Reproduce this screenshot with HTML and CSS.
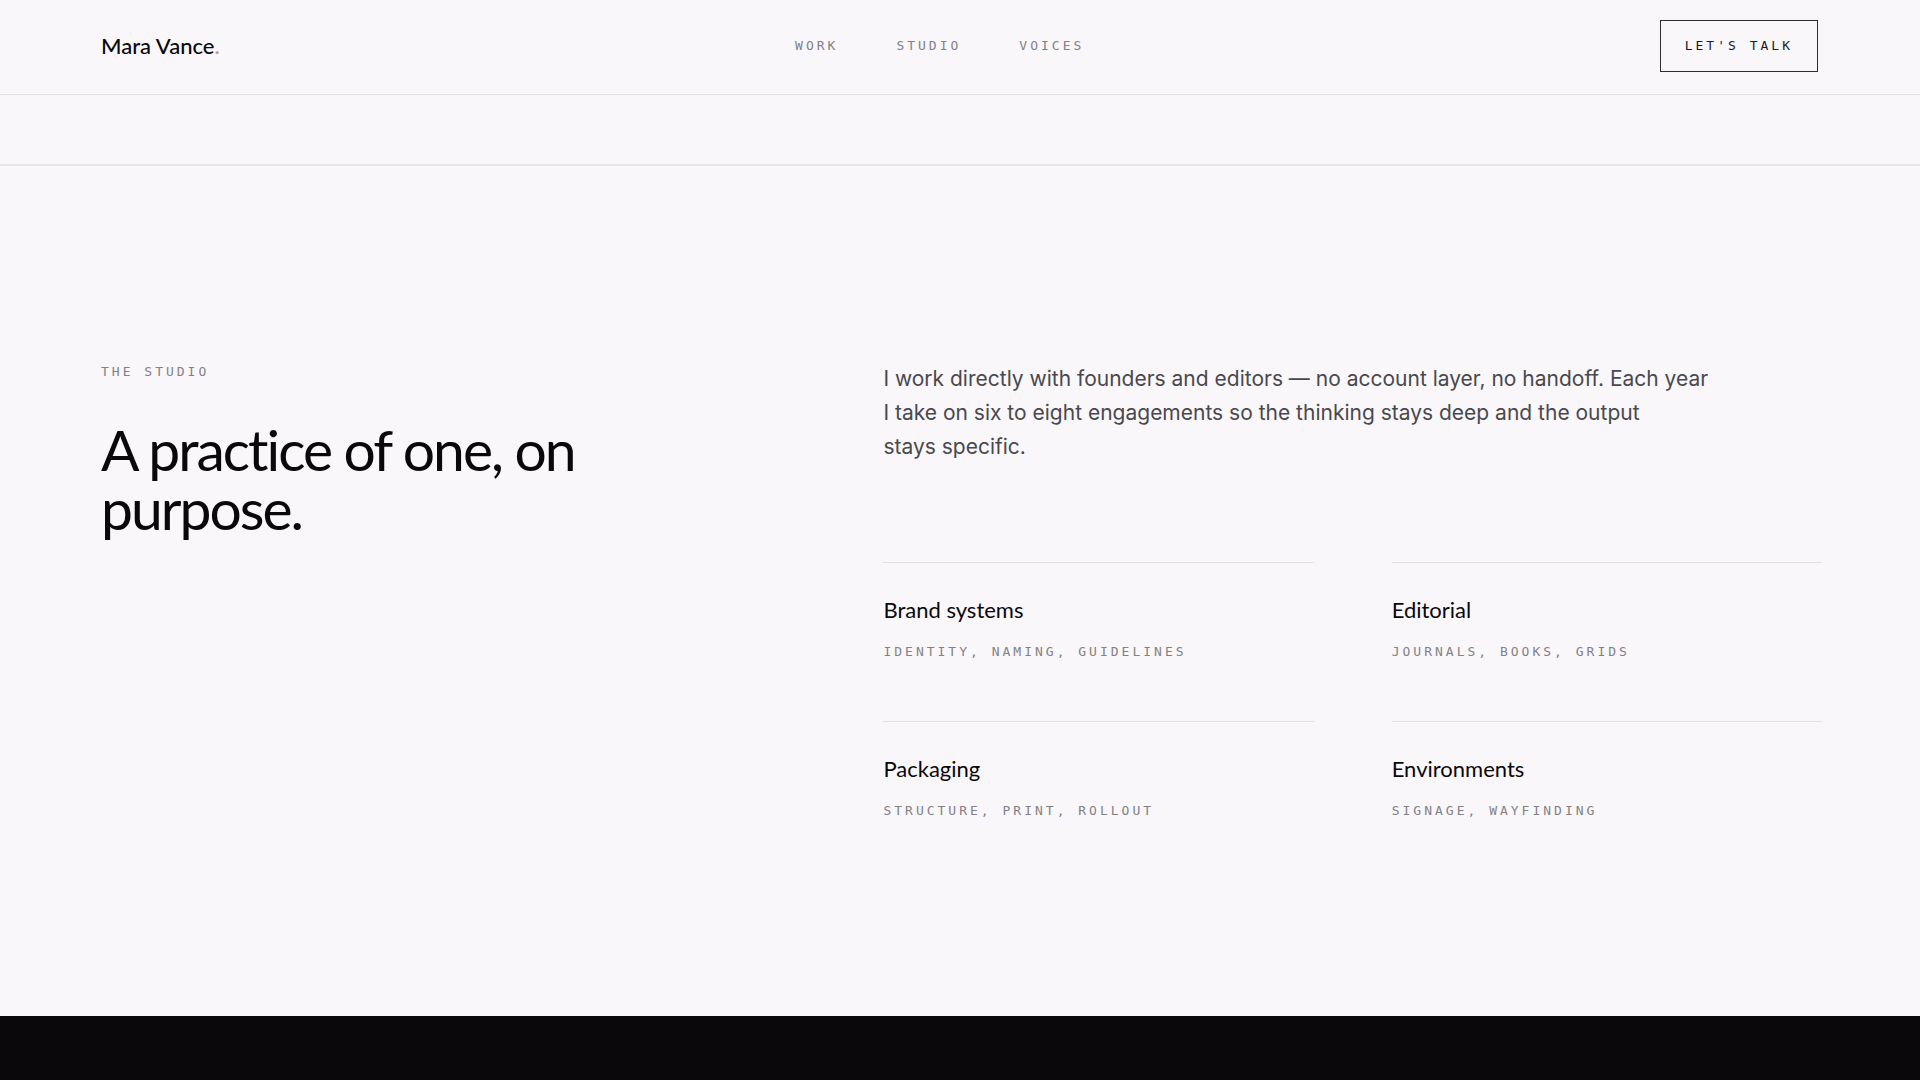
FILE: index.html
```html
<!DOCTYPE html>
<html lang="en">

<head>
    <meta charset="UTF-8">
    <meta name="viewport" content="width=device-width, initial-scale=1.0">
    <title>Mara Vance</title>
    <link rel="stylesheet" href="styles.css">
</head>

<body>
    <header class="header">
        <a class="brand" href="#">Mara Vance<span class="brand-dot">.</span></a>
        <nav class="nav">
            <a class="mono nav-link" href="#work">Work</a>
            <a class="mono nav-link" href="#studio">Studio</a>
            <a class="mono nav-link" href="#voices">Voices</a>
        </nav>
        <a class="mono talk" href="#contact">Let's talk</a>
    </header>

    <main>
        <section class="work" id="work"></section>

        <section class="studio" id="studio">
            <div class="intro">
                <p class="mono label">The studio</p>
                <h2 class="title">A practice of one, on purpose.</h2>
            </div>

            <div class="details">
                <p class="lead">I work directly with founders and editors — no account layer, no handoff. Each year I take on six to eight engagements so the thinking stays deep and the output stays&nbsp;specific.</p>

                <ul class="services">
                    <li class="service">
                        <h3 class="service-name">Brand systems</h3>
                        <p class="mono">Identity, naming, guidelines</p>
                    </li>
                    <li class="service">
                        <h3 class="service-name">Editorial</h3>
                        <p class="mono">Journals, books, grids</p>
                    </li>
                    <li class="service">
                        <h3 class="service-name">Packaging</h3>
                        <p class="mono">Structure, print, rollout</p>
                    </li>
                    <li class="service">
                        <h3 class="service-name">Environments</h3>
                        <p class="mono">Signage, wayfinding</p>
                    </li>
                </ul>
            </div>
        </section>

        <section class="voices" id="voices"></section>
    </main>
</body>

</html>
```

FILE: styles.css
```css
* {
    box-sizing: border-box;
    margin: 0;
    padding: 0;
}

body {
    display: flex;
    flex-direction: column;
    min-height: 100vh;
    background-color: #f9f7fa;
    color: #0a080b;
    font-family: Inter, sans-serif;
}

a {
    color: inherit;
    text-decoration: none;
}

main {
    flex: 1;
    display: flex;
    flex-direction: column;
}

.mono {
    font-family: "DejaVu Sans Mono", monospace;
    font-size: 13px;
    line-height: 20px;
    letter-spacing: 3px;
    text-transform: uppercase;
    color: #838185;
}

.header {
    display: flex;
    justify-content: space-between;
    align-items: center;
    padding: 20px 102px 22px 101px;
    border-bottom: 1px solid #e2e0e4;
}

.brand {
    font-family: Lato, sans-serif;
    font-size: 22px;
    font-weight: 500;
    line-height: 28px;
}

.brand-dot {
    color: #a5a3a8;
}

.nav {
    display: flex;
    gap: 58px;
}

.talk {
    padding: 15px 24px;
    border: 1px solid #2f2d32;
    color: #1c1a1e;
}

.talk:hover {
    background-color: #0a080b;
    color: #f9f7fa;
}

.work {
    height: 71px;
    border-bottom: 2px solid #e6e4e8;
}

.studio {
    display: grid;
    grid-template-columns: 5fr 7fr;
    gap: 112px;
    padding: 196px 98px 195px 101px;
}

.title {
    margin-top: 38px;
    max-width: 540px;
    font-family: Lato, sans-serif;
    font-size: 57px;
    font-weight: 400;
    line-height: 59px;
    letter-spacing: -2px;
}

.lead {
    max-width: 832px;
    font-size: 21px;
    font-weight: 400;
    line-height: 34px;
    color: #4a484d;
}

.services {
    display: grid;
    grid-template-columns: 1fr 1fr;
    gap: 59px 78px;
    margin-top: 98px;
    list-style: none;
}

.service {
    border-top: 1px solid #e2e0e4;
    padding-top: 33px;
}

.service-name {
    margin-bottom: 18px;
    font-family: Lato, sans-serif;
    font-size: 22px;
    font-weight: 400;
    line-height: 28px;
}

.voices {
    flex: 1;
    background-color: #0a080b;
}
```
